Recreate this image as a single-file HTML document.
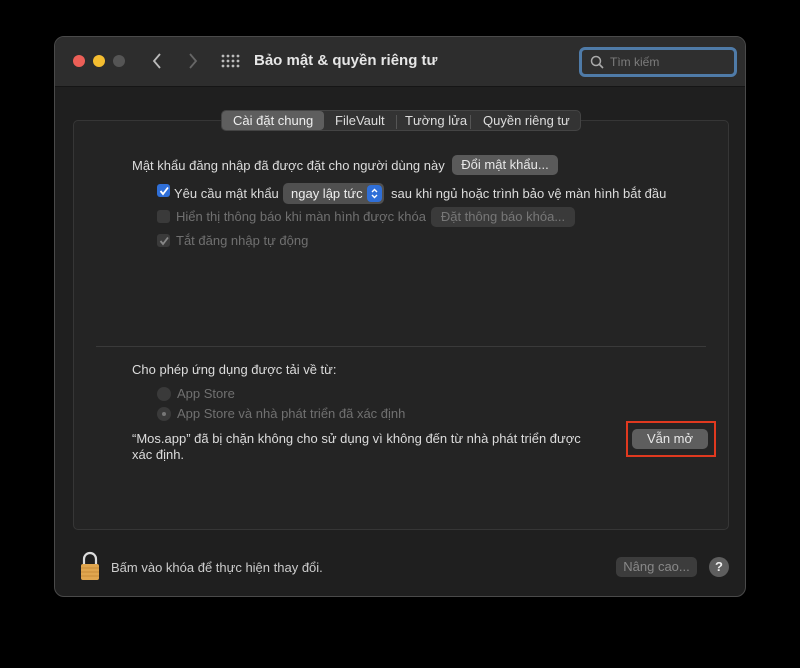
<!DOCTYPE html>
<html><head><meta charset="utf-8"><style>
*{box-sizing:border-box;margin:0;padding:0}
body{width:800px;height:668px;background:#000;position:relative;overflow:hidden;font-family:"Liberation Sans","DejaVu Sans",sans-serif;font-size:13px;color:#dcdcdc}
.a{position:absolute;white-space:nowrap}
.win{position:absolute;left:54px;top:36px;width:692px;height:561px;background:#1f1f1f;border:1px solid #4a4a4a;border-radius:10px;overflow:hidden}
.tb{position:absolute;left:0;top:0;width:100%;height:50px;background:#2d2d2d;border-bottom:1px solid #151515}
.dot{position:absolute;top:18px;width:12px;height:12px;border-radius:50%}
.box{position:absolute;left:18px;top:83px;width:656px;height:410px;background:#242424;border:1px solid #363636;border-radius:5px}
.btn{position:absolute;background:#5a5a5a;border-radius:5px;color:#e8e8e8;text-align:center;height:20px;line-height:20px}
.dis{color:#707070}
.cb{position:absolute;width:13px;height:13px;border-radius:3px}
</style></head><body>
<div class="win">
 <div class="tb">
  <div class="dot" style="left:18px;background:#ec5f57"></div>
  <div class="dot" style="left:38px;background:#f4bd30"></div>
  <div class="dot" style="left:58px;background:#555"></div>
  <svg class="a" style="left:96px;top:15px" width="12" height="18"><path d="M9 2 L3 9 L9 16" stroke="#bbb" stroke-width="1.8" fill="none"/></svg>
  <svg class="a" style="left:132px;top:15px" width="12" height="18"><path d="M3 2 L9 9 L3 16" stroke="#666" stroke-width="1.8" fill="none"/></svg>
  <svg class="a" style="left:166px;top:17px" width="20" height="16" fill="#bbb">
   <circle cx="2" cy="2" r="1.4"/><circle cx="7" cy="2" r="1.4"/><circle cx="12" cy="2" r="1.4"/><circle cx="17" cy="2" r="1.4"/>
   <circle cx="2" cy="7" r="1.4"/><circle cx="7" cy="7" r="1.4"/><circle cx="12" cy="7" r="1.4"/><circle cx="17" cy="7" r="1.4"/>
   <circle cx="2" cy="12" r="1.4"/><circle cx="7" cy="12" r="1.4"/><circle cx="12" cy="12" r="1.4"/><circle cx="17" cy="12" r="1.4"/>
  </svg>
  <div class="a" style="left:199px;top:15px;font-size:15px;font-weight:bold;color:#e6e6e6">Bảo mật &amp; quyền riêng tư</div>
  <div class="a" style="left:524px;top:10px;width:158px;height:30px;border:3px solid #4f7ba8;border-radius:6px;background:#2f2f2f"></div>
  <svg class="a" style="left:535px;top:18px" width="14" height="14"><circle cx="6" cy="6" r="4.5" stroke="#aaa" stroke-width="1.5" fill="none"/><path d="M9.5 9.5 L13 13" stroke="#aaa" stroke-width="1.6"/></svg>
  <div class="a" style="left:555px;top:18px;color:#7c7c7c;font-size:12px">Tìm kiếm</div>
 </div>
 <div class="box"></div>
 <div class="a" style="left:166px;top:73px;width:360px;height:21px;background:#333;border:1px solid #444;border-radius:5px"></div>
 <div class="a" style="left:167px;top:74px;width:102px;height:19px;background:#5e5e5e;border-radius:4px"></div>
 <div class="a" style="left:178px;top:76px;color:#eee">Cài đặt chung</div>
 <div class="a" style="left:280px;top:76px;color:#ddd">FileVault</div>
 <div class="a" style="left:341px;top:78px;width:1px;height:14px;background:#555"></div>
 <div class="a" style="left:350px;top:76px;color:#ddd">Tường lửa</div>
 <div class="a" style="left:415px;top:78px;width:1px;height:14px;background:#555"></div>
 <div class="a" style="left:428px;top:76px;color:#ddd">Quyền riêng tư</div>

 <div class="a" style="left:77px;top:121px">Mật khẩu đăng nhập đã được đặt cho người dùng này</div>
 <div class="btn" style="left:397px;top:118px;width:106px">Đổi mật khẩu...</div>
 <div class="cb" style="left:102px;top:147px;background:#2f6fd8"></div>
 <svg class="a" style="left:103px;top:148px" width="12" height="12"><path d="M2.5 6 L5 9 L10 2.5" stroke="#fff" stroke-width="1.8" fill="none"/></svg>
 <div class="a" style="left:119px;top:149px">Yêu cầu mật khẩu</div>
 <div class="a" style="left:228px;top:146px;width:101px;height:21px;background:#505050;border-radius:5px"></div>
 <div class="a" style="left:236px;top:149px;color:#eee">ngay lập tức</div>
 <div class="a" style="left:312px;top:148px;width:15px;height:17px;background:#2f6fd8;border-radius:4px"></div>
 <svg class="a" style="left:314px;top:150px" width="11" height="13"><path d="M3 5 L5.5 2.5 L8 5 M3 8 L5.5 10.5 L8 8" stroke="#fff" stroke-width="1.4" fill="none"/></svg>
 <div class="a" style="left:336px;top:149px">sau khi ngủ hoặc trình bảo vệ màn hình bắt đầu</div>
 <div class="cb" style="left:102px;top:173px;background:#3a3a3a"></div>
 <div class="a dis" style="left:121px;top:172px">Hiển thị thông báo khi màn hình được khóa</div>
 <div class="btn dis" style="left:376px;top:170px;width:144px;background:#3a3a3a;color:#777">Đặt thông báo khóa...</div>
 <div class="cb" style="left:102px;top:197px;background:#3a3a3a"></div>
 <svg class="a" style="left:103px;top:198px" width="12" height="12"><path d="M2.5 6 L5 9 L10 2.5" stroke="#888" stroke-width="1.8" fill="none"/></svg>
 <div class="a dis" style="left:121px;top:196px">Tắt đăng nhập tự động</div>

 <div class="a" style="left:41px;top:309px;width:610px;height:1px;background:#3a3a3a"></div>
 <div class="a" style="left:77px;top:325px">Cho phép ứng dụng được tải về từ:</div>
 <div class="a" style="left:102px;top:350px;width:14px;height:14px;border-radius:50%;background:#3a3a3a"></div>
 <div class="a dis" style="left:122px;top:349px">App Store</div>
 <div class="a" style="left:102px;top:370px;width:14px;height:14px;border-radius:50%;background:#3a3a3a"></div>
 <div class="a" style="left:107px;top:375px;width:4px;height:4px;border-radius:50%;background:#777"></div>
 <div class="a dis" style="left:122px;top:369px">App Store và nhà phát triển đã xác định</div>
 <div class="a" style="left:77px;top:394px;line-height:16px">“Mos.app” đã bị chặn không cho sử dụng vì không đến từ nhà phát triển được<br>xác định.</div>
 <div class="a" style="left:571px;top:384px;width:90px;height:36px;border:2px solid #e0391f"></div>
 <div class="btn" style="left:577px;top:392px;width:76px;background:#5e5e5e">Vẫn mở</div>

 <svg class="a" style="left:24px;top:514px" width="22" height="30"><path d="M5 13 V8 a6 6 0 0 1 12 0 V13" stroke="#ddd" stroke-width="2.2" fill="none"/><rect x="2" y="13" width="18" height="16" rx="2" fill="#e0a64f"/><path d="M2 17h18M2 21h18M2 25h18" stroke="#c98c3a" stroke-width="1"/></svg>
 <div class="a" style="left:56px;top:523px;color:#ccc">Bấm vào khóa để thực hiện thay đổi.</div>
 <div class="btn" style="left:561px;top:520px;width:81px;background:#3c3c3c;color:#888">Nâng cao...</div>
 <div class="a" style="left:654px;top:520px;width:20px;height:20px;border-radius:50%;background:#5e5e5e;color:#eee;text-align:center;line-height:20px;font-weight:bold">?</div>
</div>
</body></html>
